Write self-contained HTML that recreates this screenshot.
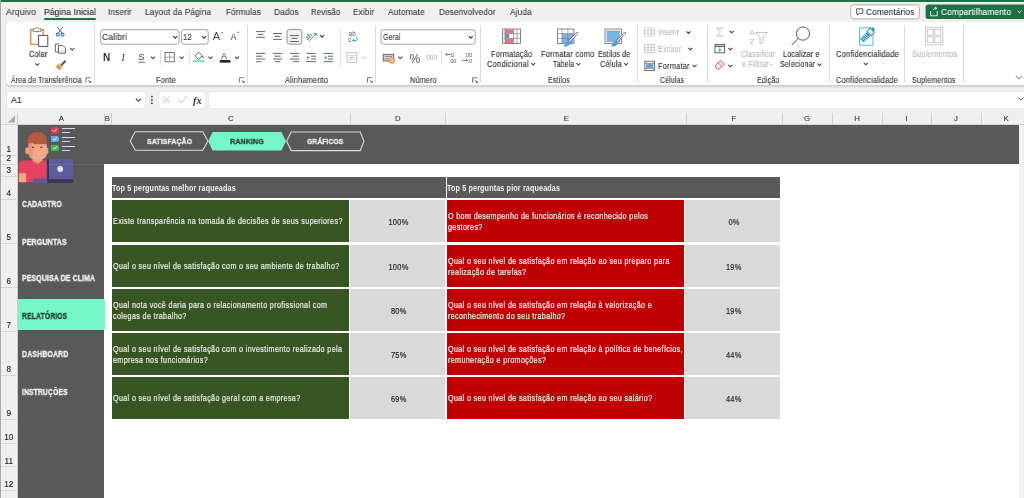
<!DOCTYPE html>
<html><head><meta charset="utf-8">
<style>
*{margin:0;padding:0;box-sizing:border-box}
html,body{width:1024px;height:498px;overflow:hidden;background:#f0f0f0;font-family:"Liberation Sans",sans-serif;position:relative;-webkit-font-smoothing:antialiased}
.a{position:absolute}
svg{will-change:transform}
.t{will-change:transform;position:absolute;white-space:nowrap;line-height:12px;font-family:"Liberation Sans",sans-serif}
.tab{font-size:8.5px;color:#3b3b3b;top:6.5px}
.gl{font-size:7.3px;color:#333;top:74px;transform:scaleY(1.22)}
.rb{font-size:7.5px;color:#2b2b2b;transform:scaleY(1.22)}
.sep{position:absolute;width:1px;background:#dcdcdc}
.ch{-webkit-text-stroke:.1px currentColor;will-change:transform;position:absolute;top:112px;height:12.6px;font-size:7.8px;color:#333;text-align:center;line-height:13px}
.cs{position:absolute;top:113px;height:11.6px;width:1px;background:#cfcfcf}
.rh{-webkit-text-stroke:.15px currentColor;position:absolute;left:0;width:17.5px;font-size:8.2px;color:#262626;text-align:center}
.rs{position:absolute;left:0;width:17.5px;height:1px;background:#d6d6d6}
.side{font-size:7px;font-weight:bold;color:#f2f2f2;left:22.3px}
.hdr{will-change:transform;position:absolute;background:#595959;color:#f2f2f2;font-size:8.2px;font-weight:bold;line-height:21px;padding-left:0.4px;white-space:nowrap}
.hs{display:inline-block;transform-origin:0 50%;transform:scaleX(.88);letter-spacing:.15px;padding-top:0.5px}
.g{will-change:transform;position:absolute;background:#375623;color:#ececec;font-size:8.6px;display:flex;align-items:center;padding-left:1.2px;line-height:11.2px}
.r{will-change:transform;position:absolute;background:#c00000;color:#f4f4f4;font-size:8.6px;display:flex;align-items:center;padding-left:1.2px;line-height:11.2px}
.v{will-change:transform;position:absolute;background:#d9d9d9;color:#262626;font-size:8.6px;display:flex;align-items:center;justify-content:center;padding-left:2.4px}
.s{-webkit-text-stroke:.2px currentColor;display:inline-block;white-space:nowrap;transform-origin:0 50%;transform:scale(.83,1);letter-spacing:.45px;padding-top:2px}
.v .s{transform-origin:50% 50%;font-size:9.3px;transform:scale(.8,1);letter-spacing:.3px;padding-top:2px}
</style></head><body>
<!-- top green strip -->
<div class="a" style="left:0;top:0;width:1024px;height:2px;background:#1e7145"></div>
<!-- tabs -->
<div class="a" style="left:44px;top:18px;width:52px;height:1.6px;background:#1e7145;border-radius:1px"></div>

<!-- ribbon panel -->
<div class="a" style="left:6px;top:21.8px;width:1030px;height:63.7px;background:#fff;border-radius:4px;box-shadow:0 1.5px 2px rgba(0,0,0,.14)"></div>

<!-- group labels -->

<!-- group separators -->
<div class="sep" style="left:94.4px;top:25px;height:58px"></div>
<div class="sep" style="left:247px;top:25px;height:58px"></div>
<div class="sep" style="left:374.7px;top:25px;height:58px"></div>
<div class="sep" style="left:480px;top:25px;height:58px"></div>
<div class="sep" style="left:636.5px;top:25px;height:58px"></div>
<div class="sep" style="left:706.6px;top:25px;height:58px"></div>
<div class="sep" style="left:828.7px;top:25px;height:58px"></div>
<div class="sep" style="left:904.3px;top:25px;height:58px"></div>
<div class="sep" style="left:962.6px;top:25px;height:58px"></div>


<svg class="a" style="left:0;top:0" width="1024" height="125" viewBox="0 0 1024 125">
<defs>
<g id="chev"><polyline points="-2,-1 0,1 2,-1" fill="none" stroke="#3a3a3a" stroke-width="1.05"/></g>
<g id="chevg"><polyline points="-2,-1 0,1 2,-1" fill="none" stroke="#b0b0b0" stroke-width="0.9"/></g>
<g id="launch"><path d="M-2.4,-2.4 H2.4 M-2.4,-2.4 V2.4 M-0.2,-0.2 L2.4,2.4 M2.4,0.6 V2.4 H0.6" fill="none" stroke="#555" stroke-width="0.8"/></g>
</defs>
<!-- ===== Clipboard ===== -->
<rect x="30.8" y="29.8" width="12.4" height="14.6" fill="#fff" stroke="#d39445" stroke-width="1.5"/>
<path d="M31.6,31 V43.6 H42.4" fill="none" stroke="#fff" stroke-width="0.5" stroke-dasharray="0.8 1.2"/>
<path d="M33.2,31.6 V28.8 H35.2 Q37,26 38.8,28.8 H41 V31.6 Z" fill="#fff" stroke="#777" stroke-width="0.9"/>
<rect x="38.6" y="35.4" width="9.2" height="11" fill="#fff" stroke="#555" stroke-width="1"/>
<use href="#chev" x="37.3" y="64.3"/>
<!-- scissors -->
<path d="M57.4,27 L62.3,33.2 M63,27 L58.1,33.2" stroke="#555" stroke-width="0.9" fill="none"/>
<circle cx="57.8" cy="34.6" r="1.5" fill="none" stroke="#2b7bd1" stroke-width="1.1"/>
<circle cx="62.6" cy="34.6" r="1.5" fill="none" stroke="#2b7bd1" stroke-width="1.1"/>
<!-- copy -->
<path d="M59,44 H55.4 V52 H58.5" fill="none" stroke="#555" stroke-width="0.9"/>
<path d="M58.5,45.6 H63 L65.4,48 V53.2 H58.5 Z" fill="#fff" stroke="#555" stroke-width="0.9"/>
<path d="M60.5,51 H63" stroke="#888" stroke-width="0.6"/>
<use href="#chev" x="72.3" y="49"/>
<!-- format painter -->
<path d="M61,65.5 L65.6,60.8" stroke="#555" stroke-width="2" />
<path d="M56,66.2 L59.6,63.2 L63,66.6 L60,70 Q57.5,70 56,66.2 Z" fill="#d99a45"/>
<path d="M58.5,64.3 L62,67.6" stroke="#fff" stroke-width="0.6"/>
<use href="#launch" x="88.3" y="80.2"/>

<!-- ===== Fonte ===== -->
<rect x="100.6" y="29.6" width="78.4" height="14.6" rx="2.5" fill="#fff" stroke="#8c8c8c" stroke-width="0.8"/>
<use href="#chev" x="175.2" y="37.2"/>
<rect x="181.6" y="29.6" width="26.6" height="14.6" rx="2.5" fill="#fff" stroke="#8c8c8c" stroke-width="0.8"/>
<use href="#chev" x="204.2" y="37.2"/>
<text x="212.8" y="40.2" font-family="Liberation Sans" font-size="11.2" fill="#444">A</text>
<path d="M220.6,33.4 L222,32 L223.4,33.4" fill="none" stroke="#3a7fc4" stroke-width="0.8"/>
<text x="230.4" y="40.2" font-family="Liberation Sans" font-size="9" fill="#444">A</text>
<path d="M236.8,31.6 L238.2,33 L239.6,31.6" fill="none" stroke="#3a7fc4" stroke-width="0.8"/>
<text x="103" y="60.8" font-family="Liberation Sans" font-weight="bold" font-size="10" fill="#333">N</text>
<text x="121.6" y="60.8" font-family="Liberation Serif" font-style="italic" font-size="10" fill="#444">I</text>
<text x="138.2" y="60.2" font-family="Liberation Sans" font-size="9.4" fill="#444">S</text>
<path d="M138.6,62.3 H145" stroke="#444" stroke-width="0.8"/>
<use href="#chev" x="153" y="57.6"/>
<rect x="160" y="50" width="0.8" height="15" fill="#d4d4d4"/>
<rect x="165" y="52.5" width="9.3" height="9.3" fill="none" stroke="#666" stroke-width="0.9"/>
<path d="M169.65,52.5 V61.8 M165,57.15 H174.3" stroke="#888" stroke-width="0.7"/>
<use href="#chev" x="181.7" y="57.6"/>
<rect x="188.8" y="50" width="0.8" height="15" fill="#d4d4d4"/>
<path d="M195,55.8 L198.6,52.2 L202.2,55.8 L198.6,59.4 Z" fill="none" stroke="#555" stroke-width="0.9"/>
<path d="M202.3,56 Q203.4,57.8 202.6,58.6" fill="none" stroke="#2b7bd1" stroke-width="1"/>
<rect x="193.2" y="60" width="10.8" height="2.3" fill="#7fe8c2"/>
<use href="#chev" x="210.5" y="57.6"/>
<text x="221" y="58.6" font-family="Liberation Sans" font-size="9" fill="#444">A</text>
<rect x="219.8" y="60" width="10.6" height="2.6" fill="#222"/>
<use href="#chev" x="237" y="57.6"/>
<use href="#launch" x="241.8" y="80.2"/>

<!-- ===== Alinhamento ===== -->
<path d="M256,31.6 H265 M257.5,34.4 H263.5 M256,37.3 H265" stroke="#555" stroke-width="0.9"/>
<path d="M273,33.6 H282 M274.5,36.4 H280.5 M273,39.4 H282" stroke="#555" stroke-width="0.9"/>
<rect x="287" y="29.4" width="14.8" height="14.8" rx="2.6" fill="#f2f2f2" stroke="#7a7a7a" stroke-width="0.8"/>
<path d="M290,35.6 H299 M291.5,38.4 H297.5 M290,41.5 H299" stroke="#555" stroke-width="0.9"/>
<text x="0" y="0" transform="translate(307.5,40.5) rotate(-45)" font-family="Liberation Sans" font-size="6.4" fill="#555">ab</text>
<path d="M309,41 L316.3,33.5 M313.6,33.5 H316.3 V36.2" fill="none" stroke="#2b88d8" stroke-width="0.9"/>
<use href="#chev" x="322.1" y="36.2"/>
<path d="M256,53.4 H265.2 M256,56.2 H262.5 M256,59 H265.2 M256,61.7 H261.5" stroke="#555" stroke-width="0.9"/>
<path d="M273,53.4 H282.2 M274.5,56.2 H280.7 M273,59 H282.2 M274.8,61.7 H280.4" stroke="#555" stroke-width="0.9"/>
<path d="M289.8,53.4 H299 M292.5,56.2 H299 M289.8,59 H299 M293,61.7 H299" stroke="#555" stroke-width="0.9"/>
<path d="M306.4,53.4 H316 M311,56.2 H316 M311,59 H316 M306.4,61.7 H316" stroke="#555" stroke-width="0.9"/>
<path d="M310,57.6 H306.8 M308.4,56.2 L306.8,57.6 L308.4,59" fill="none" stroke="#2b88d8" stroke-width="0.9"/>
<path d="M323.5,53.4 H333 M328,56.2 H333 M328,59 H333 M323.5,61.7 H333" stroke="#555" stroke-width="0.9"/>
<path d="M323.8,57.6 H327 M325.5,56.2 L327,57.6 L325.5,59" fill="none" stroke="#2b88d8" stroke-width="0.9"/>
<rect x="340.2" y="28" width="0.8" height="40" fill="#dedede"/>
<text x="348.6" y="36.4" font-family="Liberation Sans" font-size="6.4" fill="#555">ab</text>
<text x="348.3" y="42" font-family="Liberation Sans" font-size="6.4" fill="#555">c</text>
<path d="M356.4,36.8 Q358.4,38.8 356.4,40.4 H352.6 M354,39.2 L352.6,40.4 L354,41.6" fill="none" stroke="#2b88d8" stroke-width="0.9"/>
<rect x="347" y="52.6" width="9.8" height="9.6" fill="none" stroke="#bdbdbd" stroke-width="0.9"/>
<path d="M347,55.6 H356.8 M347,59.2 H356.8 M349,57.4 H355 M351.9,55.6 V59.2" stroke="#c4c4c4" stroke-width="0.7"/>
<use href="#chevg" x="364" y="57.6"/>
<use href="#launch" x="369.9" y="80.2"/>

<!-- ===== Número ===== -->
<rect x="381" y="29.8" width="94.2" height="14.4" rx="2.5" fill="#fff" stroke="#8c8c8c" stroke-width="0.8"/>
<use href="#chev" x="470.8" y="37.2"/>
<rect x="383.3" y="54.4" width="10.2" height="6.6" fill="#d8d8d8" stroke="#666" stroke-width="1"/>
<path d="M384.8,56.4 H391.8 M384.8,58.8 H388.6" stroke="#6a6a6a" stroke-width="0.8"/>
<rect x="389.2" y="57.8" width="5.4" height="5.4" rx="1.4" fill="#f0b77c" stroke="#d98d3f" stroke-width="0.7"/>
<use href="#chev" x="400.3" y="57.6"/>
<text x="409.4" y="62.6" font-family="Liberation Sans" font-size="12.2" fill="#555">%</text>
<text x="426.2" y="60.2" font-family="Liberation Sans" font-size="6.6" fill="#aaa">000</text>
<rect x="441" y="50" width="0.8" height="15" fill="#d8d8d8"/>
<text x="449.4" y="57" font-family="Liberation Sans" font-size="5.6" fill="#555">.0</text>
<text x="448.6" y="62.6" font-family="Liberation Sans" font-size="5.6" fill="#555">.00</text>
<path d="M451,54.5 H445.6 M447.2,53 L445.6,54.5 L447.2,56" fill="none" stroke="#2b88d8" stroke-width="0.9"/>
<text x="464.4" y="57" font-family="Liberation Sans" font-size="5.6" fill="#555">.00</text>
<text x="467.4" y="62.6" font-family="Liberation Sans" font-size="5.6" fill="#555">.0</text>
<path d="M462.4,60.5 H467.8 M466.2,59 L467.8,60.5 L466.2,62" fill="none" stroke="#2b88d8" stroke-width="0.9"/>
<use href="#launch" x="474.9" y="80.2"/>

<!-- ===== Estilos ===== -->
<g>
<rect x="502.6" y="29" width="18" height="14.4" fill="#fff" stroke="#666" stroke-width="0.8"/>
<rect x="505" y="29.4" width="8.5" height="4.3" fill="#ea7482"/>
<rect x="505" y="38.6" width="8.5" height="4.4" fill="#ea7482"/>
<rect x="505" y="34.1" width="4" height="4" fill="#5b9bd5"/>
<path d="M502.6,33.8 H520.6 M502.6,38.4 H520.6 M505,29 V43.4 M513.6,29 V43.4 M517,29 V43.4" stroke="#777" stroke-width="0.6"/>
</g>
<g>
<rect x="557.4" y="29" width="16.5" height="14.4" fill="#fff" stroke="#666" stroke-width="0.8"/>
<rect x="562" y="33.6" width="11.9" height="9.8" fill="#78b6ea"/>
<path d="M557.4,33.6 H573.9 M557.4,38.5 H573.9 M562,29 V43.4 M567.8,29 V43.4" stroke="#777" stroke-width="0.6"/>
<path d="M577.2,33 L569,41.6" stroke="#5a5a5a" stroke-width="2.4" stroke-linecap="round"/>
<path d="M577.2,33 L569,41.6" stroke="#fff" stroke-width="1.1" stroke-linecap="round"/>
<path d="M569.2,41 Q566.2,40.8 564.8,43.6 L563.6,46.8 Q567.6,47 569.8,44.6 Q571,43 569.9,41.7 Z" fill="#4ea0e2"/>
</g>
<g>
<rect x="605" y="29" width="16.5" height="14.4" fill="#fff" stroke="#666" stroke-width="0.8"/>
<rect x="606.6" y="31" width="13.4" height="10.6" fill="#78b6ea"/>
<path d="M606.6,31 H620 M606.6,41.6 H620" stroke="#555" stroke-width="0.6" stroke-dasharray="1 0.8"/>
<path d="M624.8,33 L616.6,41.6" stroke="#5a5a5a" stroke-width="2.4" stroke-linecap="round"/>
<path d="M624.8,33 L616.6,41.6" stroke="#fff" stroke-width="1.1" stroke-linecap="round"/>
<path d="M616.8,41 Q613.8,40.8 612.4,43.6 L611.2,46.8 Q615.2,47 617.4,44.6 Q618.6,43 617.5,41.7 Z" fill="#4ea0e2"/>
</g>
<use href="#chev" x="533.2" y="64"/>
<use href="#chev" x="578.4" y="64"/>
<use href="#chev" x="626" y="64"/>

<!-- ===== Células ===== -->
<g stroke="#bdbdbd" stroke-width="0.7" fill="none">
<rect x="644.6" y="28" width="10" height="8"/>
<path d="M644.6,30.7 H654.6 M644.6,33.3 H654.6 M648,28 V36 M651.3,28 V36"/>
<rect x="644.6" y="44.6" width="10" height="8"/>
<path d="M644.6,47.3 H654.6 M644.6,49.9 H654.6 M648,44.6 V52.6 M651.3,44.6 V52.6"/>
</g>
<use href="#chev" x="688.5" y="32.4"/>
<use href="#chev" x="690.4" y="48.8"/>
<rect x="644.8" y="61.2" width="9.8" height="9.4" fill="#fff" stroke="#555" stroke-width="0.8"/>
<rect x="646.4" y="63.4" width="6.6" height="5" fill="#7ab8ea"/>
<path d="M644.8,63.4 H654.6 M644.8,68.4 H654.6 M646.4,61.2 V70.6 M653,61.2 V70.6 M649.7,63.4 V68.4 M646.4,65.9 H653" stroke="#6a6a6a" stroke-width="0.5"/>
<use href="#chev" x="694.6" y="65.8"/>

<!-- ===== Edição ===== -->
<path d="M723.8,28.2 H716.4 L720.6,32 L716.4,36 H724" fill="none" stroke="#b5b5b5" stroke-width="0.9"/>
<use href="#chev" x="731.6" y="31.8"/>
<rect x="715" y="44.4" width="9.6" height="8.4" fill="#fff" stroke="#555" stroke-width="0.9"/>
<path d="M715,46.3 H724.6" stroke="#555" stroke-width="1.2"/>
<path d="M719.8,47.4 V51.2 M718.2,49.8 L719.8,51.4 L721.4,49.8" fill="none" stroke="#2b88d8" stroke-width="0.9"/>
<use href="#chev" x="730.3" y="48.8"/>
<path d="M715.6,65.2 L720.6,60.2 L724.4,64 L719.4,69 Q717.4,69.6 715.6,67.4 Z" fill="#fbe6f1" stroke="#c2407e" stroke-width="0.9"/>
<path d="M718,62.8 L721.8,66.6" stroke="#c2407e" stroke-width="0.7"/>
<use href="#chev" x="730.3" y="65.8"/>
<text x="749.6" y="35.2" font-family="Liberation Sans" font-size="8" fill="#b8b8b8">A</text>
<text x="749.6" y="44.4" font-family="Liberation Sans" font-size="8" fill="#b8b8b8">Z</text>
<path d="M755.6,32.4 H767.2 L762.8,37.6 V42.6 L760,43.8 V37.6 Z" fill="none" stroke="#b5b5b5" stroke-width="0.9"/>
<circle cx="803" cy="33.6" r="6.6" fill="#fff" stroke="#444" stroke-width="0.9"/>
<path d="M798.3,38.3 L791.6,45.2" stroke="#444" stroke-width="1"/>

<!-- ===== Confidencialidade ===== -->
<rect x="859.6" y="27.8" width="13.4" height="17.4" fill="#f6fbfd" stroke="#4eb0d2" stroke-width="0.9"/>
<g transform="rotate(-45 868.6 34)">
<rect x="859.2" y="31.4" width="9.4" height="5.2" fill="#2e95c6"/>
<path d="M861,31.4 V36.6 M862.8,31.4 V36.6 M864.6,31.4 V36.6 M866.4,31.4 V36.6" stroke="#fff" stroke-width="0.7"/>
<rect x="869.2" y="31" width="4.6" height="6" fill="#fff" stroke="#2e95c6" stroke-width="1"/>
<rect x="874" y="32.6" width="2.4" height="2.8" fill="#2e95c6"/>
</g>
<use href="#chev" x="865.8" y="63.8"/>
<use href="#chevg" x="771.2" y="64.6"/>
<use href="#chev" x="819.4" y="64.6"/>

<!-- ===== Suplementos ===== -->
<rect x="925.4" y="27.3" width="17.4" height="17.6" fill="none" stroke="#c2c2c2" stroke-width="0.9"/>
<rect x="927.6" y="29.4" width="5.8" height="5.9" fill="none" stroke="#c2c2c2" stroke-width="0.8"/>
<rect x="934.8" y="29.4" width="5.8" height="5.9" fill="none" stroke="#c2c2c2" stroke-width="0.8"/>
<rect x="927.6" y="36.8" width="5.8" height="5.9" fill="none" stroke="#c2c2c2" stroke-width="0.8"/>
<rect x="934.8" y="36.8" width="5.8" height="5.9" fill="none" stroke="#c2c2c2" stroke-width="0.8"/>
<path d="M1015.8,76 L1018.7,78.8 L1021.6,76" fill="none" stroke="#555" stroke-width="0.9"/>

<!-- ===== top buttons ===== -->
<rect x="850.8" y="4.8" width="68.6" height="14" rx="2.5" fill="#fff" stroke="#9a9a9a" stroke-width="0.8"/>
<path d="M856.6,8.8 H862.8 V13.4 H859.2 L857.4,15.2 V13.4 H856.6 Z" fill="none" stroke="#444" stroke-width="0.9"/>
<rect x="925.6" y="4.6" width="110" height="14.4" rx="2.5" fill="#1e7145"/>
<path d="M930.6,11 V15.8 H937.2 V11 M933,9.8 Q934.4,7.6 936.4,8.2 M935,7 L936.6,8.2 L935.4,9.6" fill="none" stroke="#fff" stroke-width="0.9"/>
<path d="M1017.6,10.8 L1019.6,12.6 L1021.6,10.8" fill="none" stroke="#fff" stroke-width="0.9"/>

</svg>
<!-- ribbon texts -->


<!-- formula bar -->
<div class="a" style="left:6.6px;top:91.7px;width:138px;height:16.2px;background:#fff;border-radius:3px;box-shadow:0 0 0 .5px #e2e2e2"></div>
<div class="a" style="left:158.9px;top:91.7px;width:46.6px;height:16.2px;background:#fff;border-radius:3px;box-shadow:0 0 0 .5px #e2e2e2"></div>
<div class="a" style="left:209.3px;top:91.7px;width:830px;height:16.2px;background:#fff;border-radius:3px;box-shadow:0 0 0 .5px #e2e2e2"></div>



<!-- column headers -->
<div class="a" style="left:0;top:111.7px;width:1024px;height:13px;background:#efefef;border-bottom:1px solid #d2d2d2"></div>
<div class="ch" style="left:17.5px;width:86.5px">A</div>
<div class="ch" style="left:104px;width:6.6px">B</div>
<div class="ch" style="left:110.6px;width:239.4px">C</div>
<div class="ch" style="left:350px;width:95.5px">D</div>
<div class="ch" style="left:445.5px;width:240.5px">E</div>
<div class="ch" style="left:686px;width:96px">F</div>
<div class="ch" style="left:782px;width:50px">G</div>
<div class="ch" style="left:832px;width:50px">H</div>
<div class="ch" style="left:882px;width:49px">I</div>
<div class="ch" style="left:931px;width:50px">J</div>
<div class="ch" style="left:981px;width:50px">K</div>
<div class="cs" style="left:17px"></div>
<div class="cs" style="left:104px"></div>
<div class="cs" style="left:110.5px"></div>
<div class="cs" style="left:350px"></div>
<div class="cs" style="left:445px"></div>
<div class="cs" style="left:686px"></div>
<div class="cs" style="left:782px"></div>
<div class="cs" style="left:832px"></div>
<div class="cs" style="left:882px"></div>
<div class="cs" style="left:931px"></div>
<div class="cs" style="left:980.5px"></div>

<svg class="a" style="left:0;top:0" width="1024" height="125" viewBox="0 0 1024 125"><defs><g id="chev2"><polyline points="-2.6,-1.3 0,1.3 2.6,-1.3" fill="none" stroke="#3a3a3a" stroke-width="1.05"/></g></defs><!-- ===== formula bar ===== -->
<use href="#chev2" x="138.4" y="100" />
<circle cx="151.9" cy="96.6" r="0.85" fill="#333"/><circle cx="151.9" cy="99.9" r="0.85" fill="#333"/><circle cx="151.9" cy="103.2" r="0.85" fill="#333"/>
<path d="M163.2,96 L170,103 M170,96 L163.2,103" stroke="#c0c0c0" stroke-width="0.9"/>
<path d="M177.8,99.8 L181,103 L186.8,96" fill="none" stroke="#c0c0c0" stroke-width="0.9"/>
<text x="193" y="103.8" font-family="Liberation Serif" font-style="italic" font-weight="bold" font-size="10.5" fill="#333">fx</text>
<path d="M1018.4,97.6 L1021,100 L1023.6,97.6" fill="none" stroke="#555" stroke-width="0.9"/>
<!-- select all triangle -->
<path d="M15,115.6 V122.6 H8 Z" fill="#a9a9a9"/>
</svg>
<!-- row headers -->
<div class="a" style="left:0;top:124.6px;width:17.5px;height:380px;background:#f0f0f0"></div>
<div class="a" style="left:17px;top:124.6px;width:1px;height:380px;background:#cfcfcf"></div>
<div class="rs" style="top:155.3px"></div>
<div class="rs" style="top:164.3px"></div>
<div class="rs" style="top:176px"></div>
<div class="rs" style="top:199.4px"></div>
<div class="rs" style="top:243.2px"></div>
<div class="rs" style="top:287.1px"></div>
<div class="rs" style="top:331px"></div>
<div class="rs" style="top:375px"></div>
<div class="rs" style="top:419px"></div>
<div class="rs" style="top:442.8px"></div>
<div class="rs" style="top:466.4px"></div>
<div class="rs" style="top:490px"></div>
<div class="t rh" style="top:143.5px">1</div>
<div class="t rh" style="top:153px">2</div>
<div class="t rh" style="top:165px">3</div>
<div class="t rh" style="top:188px">4</div>
<div class="t rh" style="top:232px">5</div>
<div class="t rh" style="top:276px">6</div>
<div class="t rh" style="top:320px">7</div>
<div class="t rh" style="top:364px">8</div>
<div class="t rh" style="top:408px">9</div>
<div class="t rh" style="top:432px">10</div>
<div class="t rh" style="top:455.5px">11</div>
<div class="t rh" style="top:479px">12</div>

<!-- sheet -->
<div class="a" style="left:17.5px;top:124.6px;width:1001.5px;height:374px;background:#fff"></div>
<div class="a" style="left:17.5px;top:124.6px;width:1001.5px;height:39.6px;background:#595959"></div>
<div class="a" style="left:17.5px;top:124.6px;width:86.6px;height:374px;background:#595959"></div>
<div class="a" style="left:1019.3px;top:124.6px;width:3.2px;height:374px;background:#f3f3f3"></div>


<svg class="a" style="left:0;top:124px" width="1024" height="64" viewBox="0 124 1024 64">
<!-- avatar -->
<g shape-rendering="crispEdges">
<!-- checkboxes -->
<rect x="51" y="126.8" width="7.5" height="6.9" rx="1" fill="#e2394f"/>
<rect x="51" y="135.8" width="7.5" height="6.4" rx="1" fill="#5aaee8"/>
<rect x="51" y="144.5" width="7.5" height="6.6" rx="1" fill="#3dba5c"/>
<g fill="#d8d9ef">
<rect x="62" y="128" width="13" height="1"/><rect x="62" y="131.6" width="7.7" height="1"/>
<rect x="62" y="137" width="13" height="1"/><rect x="62" y="140.6" width="7.7" height="1"/>
<rect x="62" y="146" width="13" height="1"/><rect x="62" y="149.6" width="7.7" height="1"/>
</g>
</g>
<path d="M53,130.4 L54.4,131.8 L56.8,128.8" fill="none" stroke="#fff" stroke-width="0.9"/>
<path d="M53,139 L54.4,140.4 L56.8,137.4" fill="none" stroke="#fff" stroke-width="0.9"/>
<path d="M53,147.8 L54.4,149.2 L56.8,146.2" fill="none" stroke="#fff" stroke-width="0.9"/>
<!-- shirt -->
<path d="M18.8,165 Q19,160.8 24,160.5 L33,160.3 L37.5,163.5 L42,160.3 L46.5,160.5 V182.3 H18.8 Z" fill="#e6415f"/>
<!-- neck -->
<path d="M32.5,155 H42.5 V160.5 L37.5,164 L32.5,160.5 Z" fill="#f0a07f"/>
<!-- hand -->
<rect x="18.8" y="173.2" width="7.4" height="9" fill="#f3a586"/>
<!-- ears -->
<rect x="25.4" y="147.4" width="4" height="6.5" rx="1.5" fill="#f0a07f"/>
<rect x="45" y="147.4" width="3.4" height="6.5" rx="1.5" fill="#f0a07f"/>
<!-- face -->
<path d="M28.6,141 H46.8 V153 Q46.8,159.4 40,159.4 H35.4 Q28.6,159.4 28.6,153 Z" fill="#f4a887"/>
<path d="M28.6,141 H32.6 V159 Q28.6,158 28.6,153 Z" fill="#e8927a"/>
<!-- hair -->
<path d="M27.4,143.6 Q27.4,132 37.2,132 Q47.1,132 47.1,143 L46.8,144.2 H33.8 L32.6,142.6 L28.6,143.6 Z" fill="#b65a3e"/>
<!-- eyes -->
<rect x="32.2" y="146.8" width="1.8" height="1.2" fill="#4a3030"/>
<rect x="40.4" y="146.8" width="1.8" height="1.2" fill="#4a3030"/>
<!-- laptop -->
<rect x="32.8" y="178.6" width="15" height="4" fill="#5b5c98"/>
<rect x="47.2" y="159.1" width="26" height="20.2" fill="#5c5d9a"/>
<rect x="47.2" y="159.1" width="1.8" height="20.2" fill="#33345c"/>
<rect x="47.2" y="179.2" width="26" height="3.6" fill="#36375f"/>
<circle cx="60.2" cy="169" r="2.9" fill="#e4e4f0"/>
<!-- row2/3 gridline over image -->
<path d="M18,164.4 H104" stroke="#a8a8a8" stroke-width="0.5" stroke-dasharray="1.5 1.5" opacity="0.6"/>

<!-- nav hexagons -->
<path d="M130.2,141 L135.2,131.8 H202.8 L207.9,141 L202.8,150.2 H135.2 Z" fill="none" stroke="#dcdcdc" stroke-width="1.05"/>
<path d="M208.2,141.3 L212.6,132 H281.4 L285.9,141.3 L281.4,150.6 H212.6 Z" fill="#75f7c7"/>
<path d="M286.6,141.3 L291.2,132 H360.2 L364,141.3 L360.2,150.6 H291.2 Z" fill="none" stroke="#dcdcdc" stroke-width="1.05"/>
</svg>


<!-- sidebar -->
<div class="a" style="left:17.5px;top:299.4px;width:87.4px;height:30.6px;background:#75f7c7"></div>

<!-- table -->
<div class="hdr" style="left:111.5px;top:177px;width:333.5px;height:21px"><span class="hs">Top 5 perguntas melhor raqueadas</span></div>
<div class="hdr" style="left:446.8px;top:177px;width:333.2px;height:21px"><span class="hs">Top 5 perguntas pior raqueadas</span></div>

<div class="g" style="left:111.5px;top:200.4px;width:237.1px;height:41.6px"><span class="s">Existe transparência na tomada de decisões de seus superiores?</span></div>
<div class="v" style="left:350.2px;top:200.4px;width:94.8px;height:41.6px"><span class="s">100%</span></div>
<div class="r" style="left:446.8px;top:200.4px;width:237.2px;height:41.6px"><span class="s">O bom desempenho de funcionários é reconhecido pelos<br>gestores?</span></div>
<div class="v" style="left:685.1px;top:200.4px;width:94.9px;height:41.6px"><span class="s">0%</span></div>

<div class="g" style="left:111.5px;top:244.5px;width:237.1px;height:41.5px"><span class="s">Qual o seu nível de satisfação com o seu ambiente de trabalho?</span></div>
<div class="v" style="left:350.2px;top:244.5px;width:94.8px;height:41.5px"><span class="s">100%</span></div>
<div class="r" style="left:446.8px;top:244.5px;width:237.2px;height:41.5px"><span class="s">Qual o seu nível de satisfação em relação ao seu preparo para<br>realização de tarefas?</span></div>
<div class="v" style="left:685.1px;top:244.5px;width:94.9px;height:41.5px"><span class="s">19%</span></div>

<div class="g" style="left:111.5px;top:288.9px;width:237.1px;height:41.5px"><span class="s">Qual nota você daria para o relacionamento profissional com<br>colegas de trabalho?</span></div>
<div class="v" style="left:350.2px;top:288.9px;width:94.8px;height:41.5px"><span class="s">80%</span></div>
<div class="r" style="left:446.8px;top:288.9px;width:237.2px;height:41.5px"><span class="s">Qual o seu nível de satisfação em relação à valorização e<br>reconhecimento do seu trabalho?</span></div>
<div class="v" style="left:685.1px;top:288.9px;width:94.9px;height:41.5px"><span class="s">19%</span></div>

<div class="g" style="left:111.5px;top:332.6px;width:237.1px;height:41.9px"><span class="s">Qual o seu nível de satisfação com o investimento realizado pela<br>empresa nos funcionários?</span></div>
<div class="v" style="left:350.2px;top:332.6px;width:94.8px;height:41.9px"><span class="s">75%</span></div>
<div class="r" style="left:446.8px;top:332.6px;width:237.2px;height:41.9px"><span class="s">Qual o seu nível de satisfação em relação à política de benefícios,<br>remuneração e promoções?</span></div>
<div class="v" style="left:685.1px;top:332.6px;width:94.9px;height:41.9px"><span class="s">44%</span></div>

<div class="g" style="left:111.5px;top:376.7px;width:237.1px;height:41.8px"><span class="s">Qual o seu nível de satisfação geral com a empresa?</span></div>
<div class="v" style="left:350.2px;top:376.7px;width:94.8px;height:41.8px"><span class="s">69%</span></div>
<div class="r" style="left:446.8px;top:376.7px;width:237.2px;height:41.8px"><span class="s">Qual o seu nível de satisfação em relação ao seu salário?</span></div>
<div class="v" style="left:685.1px;top:376.7px;width:94.9px;height:41.8px"><span class="s">44%</span></div>

<div class="a" style="left:0;top:0;width:1px;height:498px;background:#a9a9a9"></div>
<!-- GEN_TEXT -->
<div class="t" style="left:5.6px;top:6.05px;font-size:9.2px;letter-spacing:0.15px;color:#3b3b3b;font-weight:normal;transform-origin:0 50%;transform:scaleX(0.9324);-webkit-text-stroke:.12px currentColor">Arquivo</div>
<div class="t" style="left:44.4px;top:6.05px;font-size:9.2px;letter-spacing:0.15px;color:#1f1f1f;font-weight:normal;transform-origin:0 50%;transform:scaleX(0.9183);-webkit-text-stroke:.12px currentColor">Página Inicial</div>
<div class="t" style="left:108px;top:6.05px;font-size:9.2px;letter-spacing:0.15px;color:#3b3b3b;font-weight:normal;transform-origin:0 50%;transform:scaleX(0.8952);-webkit-text-stroke:.12px currentColor">Inserir</div>
<div class="t" style="left:145.4px;top:6.05px;font-size:9.2px;letter-spacing:0.15px;color:#3b3b3b;font-weight:normal;transform-origin:0 50%;transform:scaleX(0.8941);-webkit-text-stroke:.12px currentColor">Layout da Página</div>
<div class="t" style="left:225.9px;top:6.05px;font-size:9.2px;letter-spacing:0.15px;color:#3b3b3b;font-weight:normal;transform-origin:0 50%;transform:scaleX(0.8857);-webkit-text-stroke:.12px currentColor">Fórmulas</div>
<div class="t" style="left:274px;top:6.05px;font-size:9.2px;letter-spacing:0.15px;color:#3b3b3b;font-weight:normal;transform-origin:0 50%;transform:scaleX(0.9082);-webkit-text-stroke:.12px currentColor">Dados</div>
<div class="t" style="left:310.8px;top:6.05px;font-size:9.2px;letter-spacing:0.15px;color:#3b3b3b;font-weight:normal;transform-origin:0 50%;transform:scaleX(0.8572);-webkit-text-stroke:.12px currentColor">Revisão</div>
<div class="t" style="left:352.6px;top:6.05px;font-size:9.2px;letter-spacing:0.15px;color:#3b3b3b;font-weight:normal;transform-origin:0 50%;transform:scaleX(0.8874);-webkit-text-stroke:.12px currentColor">Exibir</div>
<div class="t" style="left:387.7px;top:6.05px;font-size:9.2px;letter-spacing:0.15px;color:#3b3b3b;font-weight:normal;transform-origin:0 50%;transform:scaleX(0.9081);-webkit-text-stroke:.12px currentColor">Automate</div>
<div class="t" style="left:439px;top:6.05px;font-size:9.2px;letter-spacing:0.15px;color:#3b3b3b;font-weight:normal;transform-origin:0 50%;transform:scaleX(0.895);-webkit-text-stroke:.12px currentColor">Desenvolvedor</div>
<div class="t" style="left:510px;top:6.05px;font-size:9.2px;letter-spacing:0.15px;color:#3b3b3b;font-weight:normal;transform-origin:0 50%;transform:scaleX(0.8988);-webkit-text-stroke:.12px currentColor">Ajuda</div>
<div class="t" style="left:10.5px;top:73.8px;font-size:8.3px;letter-spacing:0.2px;color:#333;font-weight:normal;transform-origin:0 50%;transform:scaleX(0.8273);-webkit-text-stroke:.12px currentColor">Área de Transferência</div>
<div class="t" style="left:156.3px;top:73.8px;font-size:8.3px;letter-spacing:0.2px;color:#333;font-weight:normal;transform-origin:0 50%;transform:scaleX(0.8991);-webkit-text-stroke:.12px currentColor">Fonte</div>
<div class="t" style="left:284.6px;top:73.8px;font-size:8.3px;letter-spacing:0.2px;color:#333;font-weight:normal;transform-origin:0 50%;transform:scaleX(0.8912);-webkit-text-stroke:.12px currentColor">Alinhamento</div>
<div class="t" style="left:409.6px;top:73.8px;font-size:8.3px;letter-spacing:0.2px;color:#333;font-weight:normal;transform-origin:0 50%;transform:scaleX(0.8709);-webkit-text-stroke:.12px currentColor">Número</div>
<div class="t" style="left:548.4px;top:73.8px;font-size:8.3px;letter-spacing:0.2px;color:#333;font-weight:normal;transform-origin:0 50%;transform:scaleX(0.8447);-webkit-text-stroke:.12px currentColor">Estilos</div>
<div class="t" style="left:659.8px;top:73.8px;font-size:8.3px;letter-spacing:0.2px;color:#333;font-weight:normal;transform-origin:0 50%;transform:scaleX(0.8329);-webkit-text-stroke:.12px currentColor">Células</div>
<div class="t" style="left:756.9px;top:73.8px;font-size:8.3px;letter-spacing:0.2px;color:#333;font-weight:normal;transform-origin:0 50%;transform:scaleX(0.8478);-webkit-text-stroke:.12px currentColor">Edição</div>
<div class="t" style="left:835.7px;top:73.6px;font-size:8.3px;letter-spacing:0.2px;color:#333;font-weight:normal;transform-origin:0 50%;transform:scaleX(0.8933);-webkit-text-stroke:.12px currentColor">Confidencialidade</div>
<div class="t" style="left:911.9px;top:73.6px;font-size:8.3px;letter-spacing:0.2px;color:#333;font-weight:normal;transform-origin:0 50%;transform:scaleX(0.8619);-webkit-text-stroke:.12px currentColor">Suplementos</div>
<div class="t" style="left:28.9px;top:48.2px;font-size:9.1px;letter-spacing:0.25px;color:#2b2b2b;font-weight:normal;transform-origin:0 50%;transform:scaleX(0.8043);-webkit-text-stroke:.12px currentColor">Colar</div>
<div class="t" style="left:102.2px;top:31.2px;font-size:9.4px;letter-spacing:0.15px;color:#333;font-weight:normal;transform-origin:0 50%;transform:scaleX(0.9093);-webkit-text-stroke:.12px currentColor">Calibri</div>
<div class="t" style="left:183.4px;top:31.2px;font-size:9.4px;letter-spacing:0.15px;color:#333;font-weight:normal;transform-origin:0 50%;transform:scaleX(0.834);-webkit-text-stroke:.12px currentColor">12</div>
<div class="t" style="left:383.2px;top:31.2px;font-size:9.4px;letter-spacing:0.15px;color:#333;font-weight:normal;transform-origin:0 50%;transform:scaleX(0.7461);-webkit-text-stroke:.12px currentColor">Geral</div>
<div class="t" style="left:491px;top:47.6px;font-size:9.1px;letter-spacing:0.25px;color:#2b2b2b;font-weight:normal;transform-origin:0 50%;transform:scaleX(0.8111);-webkit-text-stroke:.12px currentColor">Formatação</div>
<div class="t" style="left:487.4px;top:57.8px;font-size:9.1px;letter-spacing:0.25px;color:#2b2b2b;font-weight:normal;transform-origin:0 50%;transform:scaleX(0.8316);-webkit-text-stroke:.12px currentColor">Condicional</div>
<div class="t" style="left:540.5px;top:47.6px;font-size:9.1px;letter-spacing:0.25px;color:#2b2b2b;font-weight:normal;transform-origin:0 50%;transform:scaleX(0.8244);-webkit-text-stroke:.12px currentColor">Formatar como</div>
<div class="t" style="left:553.1px;top:57.8px;font-size:9.1px;letter-spacing:0.25px;color:#2b2b2b;font-weight:normal;transform-origin:0 50%;transform:scaleX(0.7577);-webkit-text-stroke:.12px currentColor">Tabela</div>
<div class="t" style="left:598px;top:47.6px;font-size:9.1px;letter-spacing:0.25px;color:#2b2b2b;font-weight:normal;transform-origin:0 50%;transform:scaleX(0.7715);-webkit-text-stroke:.12px currentColor">Estilos de</div>
<div class="t" style="left:600px;top:57.8px;font-size:9.1px;letter-spacing:0.25px;color:#2b2b2b;font-weight:normal;transform-origin:0 50%;transform:scaleX(0.8022);-webkit-text-stroke:.12px currentColor">Célula</div>
<div class="t" style="left:657.7px;top:26.4px;font-size:9.1px;letter-spacing:0.25px;color:#b5b5b5;font-weight:normal;transform-origin:0 50%;transform:scaleX(0.7988);-webkit-text-stroke:.12px currentColor">Inserir</div>
<div class="t" style="left:657.7px;top:42.8px;font-size:9.1px;letter-spacing:0.25px;color:#b5b5b5;font-weight:normal;transform-origin:0 50%;transform:scaleX(0.8052);-webkit-text-stroke:.12px currentColor">Excluir</div>
<div class="t" style="left:657.7px;top:59.8px;font-size:9.1px;letter-spacing:0.25px;color:#2b2b2b;font-weight:normal;transform-origin:0 50%;transform:scaleX(0.8177);-webkit-text-stroke:.12px currentColor">Formatar</div>
<div class="t" style="left:741px;top:47.85px;font-size:9.1px;letter-spacing:0.25px;color:#b5b5b5;font-weight:normal;transform-origin:0 50%;transform:scaleX(0.7707);-webkit-text-stroke:.12px currentColor">Classificar</div>
<div class="t" style="left:742.1px;top:57.85px;font-size:9.1px;letter-spacing:0.25px;color:#b5b5b5;font-weight:normal;transform-origin:0 50%;transform:scaleX(0.8131);-webkit-text-stroke:.12px currentColor">e Filtrar</div>
<div class="t" style="left:782.6px;top:47.85px;font-size:9.1px;letter-spacing:0.25px;color:#2b2b2b;font-weight:normal;transform-origin:0 50%;transform:scaleX(0.7802);-webkit-text-stroke:.12px currentColor">Localizar e</div>
<div class="t" style="left:780px;top:57.85px;font-size:9.1px;letter-spacing:0.25px;color:#2b2b2b;font-weight:normal;transform-origin:0 50%;transform:scaleX(0.7752);-webkit-text-stroke:.12px currentColor">Selecionar</div>
<div class="t" style="left:835.7px;top:47.6px;font-size:9.1px;letter-spacing:0.25px;color:#2b2b2b;font-weight:normal;transform-origin:0 50%;transform:scaleX(0.8229);-webkit-text-stroke:.12px currentColor">Confidencialidade</div>
<div class="t" style="left:911.5px;top:47.6px;font-size:9.1px;letter-spacing:0.25px;color:#b8b8b8;font-weight:normal;transform-origin:0 50%;transform:scaleX(0.8147);-webkit-text-stroke:.12px currentColor">Suplementos</div>
<div class="t" style="left:866px;top:5.8px;font-size:9.4px;letter-spacing:0.2px;color:#2b2b2b;font-weight:normal;transform-origin:0 50%;transform:scaleX(0.8767);-webkit-text-stroke:.12px currentColor">Comentários</div>
<div class="t" style="left:941px;top:5.8px;font-size:9.4px;letter-spacing:0.2px;color:#ffffff;font-weight:normal;transform-origin:0 50%;transform:scaleX(0.8788);-webkit-text-stroke:.12px currentColor">Compartilhamento</div>
<div class="t" style="left:10.5px;top:94.2px;font-size:9.4px;letter-spacing:0.2px;color:#222;font-weight:normal;transform-origin:0 50%;transform:scaleX(0.9247);-webkit-text-stroke:.12px currentColor">A1</div>
<div class="t" style="left:146.7px;top:136.2px;font-size:8.0px;letter-spacing:0.1px;color:#f2f2f2;font-weight:bold;transform-origin:0 50%;transform:scaleX(0.8687);-webkit-text-stroke:.3px currentColor">SATISFAÇÃO</div>
<div class="t" style="left:229.9px;top:136.2px;font-size:8.0px;letter-spacing:0.1px;color:#1f3f28;font-weight:bold;transform-origin:0 50%;transform:scaleX(0.8899);-webkit-text-stroke:.3px currentColor">RANKING</div>
<div class="t" style="left:306.8px;top:136.2px;font-size:8.0px;letter-spacing:0.1px;color:#f2f2f2;font-weight:bold;transform-origin:0 50%;transform:scaleX(0.8441);-webkit-text-stroke:.3px currentColor">GRÁFICOS</div>
<div class="t" style="left:22.3px;top:198.4px;font-size:8.4px;letter-spacing:0.1px;color:#f2f2f2;font-weight:bold;transform-origin:0 50%;transform:scaleX(0.8233);-webkit-text-stroke:.3px currentColor">CADASTRO</div>
<div class="t" style="left:22.3px;top:235.5px;font-size:8.4px;letter-spacing:0.1px;color:#f2f2f2;font-weight:bold;transform-origin:0 50%;transform:scaleX(0.8447);-webkit-text-stroke:.3px currentColor">PERGUNTAS</div>
<div class="t" style="left:22.3px;top:272.3px;font-size:8.4px;letter-spacing:0.1px;color:#f2f2f2;font-weight:bold;transform-origin:0 50%;transform:scaleX(0.8361);-webkit-text-stroke:.3px currentColor">PESQUISA DE CLIMA</div>
<div class="t" style="left:22.3px;top:309.8px;font-size:8.4px;letter-spacing:0.1px;color:#1d3d26;font-weight:bold;transform-origin:0 50%;transform:scaleX(0.82);-webkit-text-stroke:.3px currentColor">RELATÓRIOS</div>
<div class="t" style="left:22.3px;top:348.2px;font-size:8.4px;letter-spacing:0.1px;color:#f2f2f2;font-weight:bold;transform-origin:0 50%;transform:scaleX(0.8393);-webkit-text-stroke:.3px currentColor">DASHBOARD</div>
<div class="t" style="left:22.3px;top:385.7px;font-size:8.4px;letter-spacing:0.1px;color:#f2f2f2;font-weight:bold;transform-origin:0 50%;transform:scaleX(0.816);-webkit-text-stroke:.3px currentColor">INSTRUÇÕES</div>
<!-- /GEN_TEXT -->
</body></html>
